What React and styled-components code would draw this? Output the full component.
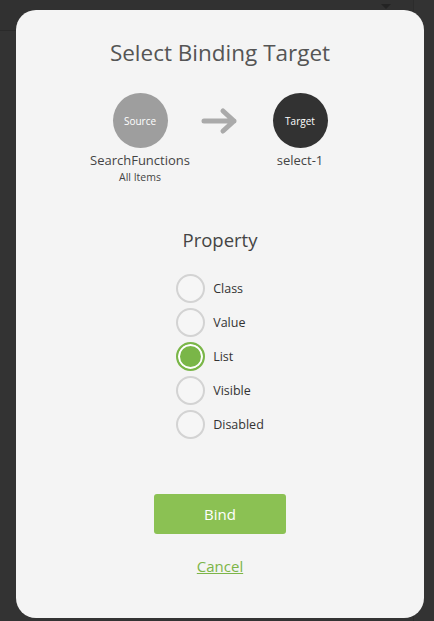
import React, { useState } from 'react';
import styled, { createGlobalStyle } from 'styled-components';

const GlobalStyle = createGlobalStyle`
  html, body {
    margin: 0;
    padding: 0;
    background: #323232;
    font-family: "Open Sans", "Noto Sans", sans-serif;
    overflow: hidden;
  }
`;

const Screen = styled.div`
  position: relative;
  width: 434px;
  height: 621px;
  background: #333333;
  overflow: hidden;
`;

const BackPanel = styled.div`
  display: flex;
  height: 100%;
`;

const BackLeft = styled.div`
  flex: 1;
  border-top: 30px solid #313131;
  box-shadow: inset 0 1px 0 #2a2a2a;
`;

const BackRight = styled.div`
  width: 20px;
  border-left: 1px solid #2c2c2c;
`;

const Caret = styled.div`
  position: absolute;
  top: 4px;
  left: 381px;
  width: 0;
  height: 0;
  border-left: 5px solid transparent;
  border-right: 5px solid transparent;
  border-top: 5px solid #232323;
`;

const Overlay = styled.div`
  position: absolute;
  inset: 0;
  padding: 10px 10px 3px 16px;
`;

const Modal = styled.div`
  box-sizing: border-box;
  width: 408px;
  height: 608px;
  background: #f4f4f4;
  border-radius: 20px;
  padding-top: 27px;
  display: flex;
  flex-direction: column;
  align-items: center;
`;

const Title = styled.h1`
  margin: 0;
  font-size: 22.5px;
  line-height: 32px;
  font-weight: 400;
  color: #555555;
`;

const Flow = styled.div`
  display: flex;
  align-items: flex-start;
  margin-top: 24px;
`;

const Node = styled.div`
  width: 120px;
  display: flex;
  flex-direction: column;
  align-items: center;
`;

const Circle = styled.div`
  width: 55px;
  height: 55px;
  border-radius: 50%;
  background: ${(p) => (p.$dark ? '#323232' : '#9e9e9e')};
  color: #ffffff;
  font-size: 10px;
  display: flex;
  align-items: center;
  justify-content: center;
`;

const NodeName = styled.div`
  margin-top: 3px;
  font-size: 13px;
  line-height: 18px;
  color: #444444;
`;

const NodeSub = styled.div`
  margin-top: 2px;
  font-size: 10.5px;
  line-height: 13px;
  color: #444444;
`;

const ArrowBox = styled.div`
  width: 40px;
  height: 55px;
  display: flex;
  align-items: center;
  justify-content: center;
`;

const Section = styled.h2`
  margin: 44px 0 0;
  font-size: 18.5px;
  line-height: 24px;
  font-weight: 400;
  color: #444444;
`;

const Options = styled.div`
  margin-top: 22px;
  display: flex;
  flex-direction: column;
  gap: 5px;
`;

const Option = styled.label`
  display: flex;
  align-items: center;
  gap: 8px;
  cursor: pointer;
  font-size: 12.5px;
  color: #333333;
`;

const Radio = styled.span`
  box-sizing: border-box;
  width: 29px;
  height: 29px;
  border-radius: 50%;
  border: 2px solid ${(p) => (p.$on ? '#7ab648' : '#d3d3d3')};
  background: ${(p) => (p.$on ? '#7ab648' : '#f6f6f6')};
  box-shadow: ${(p) => (p.$on ? 'inset 0 0 0 2px #ffffff' : 'none')};
`;

const BindButton = styled.button`
  margin-top: 55px;
  width: 132px;
  height: 40px;
  border: none;
  border-radius: 3px;
  background: #8bc153;
  color: #ffffff;
  font-family: inherit;
  font-size: 15px;
  cursor: pointer;
`;

const CancelLink = styled.a`
  margin-top: 22px;
  font-size: 15px;
  line-height: 20px;
  color: #7cb548;
  text-decoration: underline;
  cursor: pointer;
`;

const Arrow = () => (
  <svg width="38" height="28" viewBox="0 0 38 28">
    <path
      d="M3 14 H33 M22 4 L33 14 L22 24"
      fill="none"
      stroke="#aaaaaa"
      strokeWidth="5"
      strokeLinecap="round"
      strokeLinejoin="round"
    />
  </svg>
);

const properties = ['Class', 'Value', 'List', 'Visible', 'Disabled'];

export default function App() {
  const [selected, setSelected] = useState('List');
  return (
    <Screen>
      <GlobalStyle />
      <BackPanel>
        <BackLeft />
        <BackRight />
      </BackPanel>
      <Caret />
      <Overlay>
        <Modal>
          <Title>Select Binding Target</Title>
          <Flow>
            <Node>
              <Circle>Source</Circle>
              <NodeName>SearchFunctions</NodeName>
              <NodeSub>All Items</NodeSub>
            </Node>
            <ArrowBox>
              <Arrow />
            </ArrowBox>
            <Node>
              <Circle $dark>Target</Circle>
              <NodeName>select-1</NodeName>
            </Node>
          </Flow>
          <Section>Property</Section>
          <Options>
            {properties.map((name) => (
              <Option key={name} onClick={() => setSelected(name)}>
                <Radio $on={selected === name} />
                {name}
              </Option>
            ))}
          </Options>
          <BindButton>Bind</BindButton>
          <CancelLink>Cancel</CancelLink>
        </Modal>
      </Overlay>
    </Screen>
  );
}
